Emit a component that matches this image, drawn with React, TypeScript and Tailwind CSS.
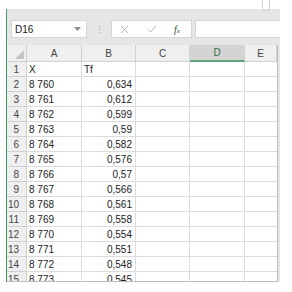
import React from "react";

const data: [string, string][] = [
  ["X", "Tf"],
  ["8 760", "0,634"],
  ["8 761", "0,612"],
  ["8 762", "0,599"],
  ["8 763", "0,59"],
  ["8 764", "0,582"],
  ["8 765", "0,576"],
  ["8 766", "0,57"],
  ["8 767", "0,566"],
  ["8 768", "0,561"],
  ["8 769", "0,558"],
  ["8 770", "0,554"],
  ["8 771", "0,551"],
  ["8 772", "0,548"],
  ["8 773", "0,545"],
];

const cols = [
  { name: "A", w: "w-[55px]" },
  { name: "B", w: "w-[54px]" },
  { name: "C", w: "w-[54px]" },
  { name: "D", w: "w-[55px]" },
  { name: "E", w: "w-[32px]" },
];

export default function App() {
  return (
    <div className="relative w-[292px] h-[292px] overflow-hidden bg-white text-[#222] [font-family:'Liberation_Sans',Arial,sans-serif]">
      <div className="absolute left-[262px] top-0 h-[11px] w-[8px] border-x border-b border-[#d4d4d4]" />
      <div className="pt-[9px] pl-[6px]">
        <div className="flex h-[273px] w-[274px] flex-col overflow-hidden border-l border-[#3f9a62] bg-[#e6e6e6]">
          {/* formula bar */}
          <div className="mt-[11px] flex h-[18px] shrink-0 items-stretch">
            <div className="ml-[4px] flex w-[76px] items-center justify-between border border-[#d6d6d6] bg-white pl-[3px] pr-[5px] text-[10px]">
              <span>D16</span>
              <svg width="7" height="4" viewBox="0 0 7 4">
                <path d="M0 0h7L3.5 4z" fill="#8a8a8a" />
              </svg>
            </div>
            <div className="flex w-[24px] flex-col items-center justify-center gap-[2px]">
              <span className="h-[1px] w-[1px] bg-[#aaa]" />
              <span className="h-[1px] w-[1px] bg-[#aaa]" />
              <span className="h-[1px] w-[1px] bg-[#aaa]" />
            </div>
            <div className="flex w-[81px] items-center border border-[#d6d6d6] bg-white">
              <svg className="ml-[8px]" width="9" height="9" viewBox="0 0 9 9">
                <path d="M1 1l7 7M8 1L1 8" stroke="#b4b4b4" strokeWidth="1" />
              </svg>
              <svg className="ml-[18px]" width="10" height="8" viewBox="0 0 10 8">
                <path d="M1 4.5l2.5 2.5L9 1" stroke="#b4b4b4" strokeWidth="1" fill="none" />
              </svg>
              <span className="ml-[17px] text-[10px] italic text-[#444] [font-family:'Liberation_Serif',serif]">
                f<span className="text-[7px]">x</span>
              </span>
            </div>
            <div className="ml-[3px] flex-1 border border-r-0 border-[#d6d6d6] bg-white" />
          </div>

          {/* grid */}
          <div className="mt-[7px] flex h-[237px] w-[271px] shrink-0 flex-col overflow-hidden border-r border-b border-[#bdbdbd] bg-white">
            <div className="flex h-[17px] shrink-0 bg-[#efefef] text-[10px] text-[#444]">
              <div className="relative w-[20px] border-r border-b border-[#d0d0d0]">
                <svg className="absolute right-[2px] bottom-[2px]" width="9" height="9" viewBox="0 0 9 9">
                  <path d="M9 0v9H0z" fill="#c4c4c4" />
                </svg>
              </div>
              {cols.map((c) => (
                <div
                  key={c.name}
                  className={`${c.w} flex shrink-0 items-center justify-center border-r border-[#d0d0d0] ${
                    c.name === "D"
                      ? "border-b-2 border-b-[#5fa57d] bg-[#d4d4d4] text-[#2e6e4a]"
                      : "border-b border-b-[#d0d0d0]"
                  }`}
                >
                  {c.name}
                </div>
              ))}
            </div>
            {data.map((r, i) => (
              <div key={i} className="flex h-[15px] shrink-0 text-[10px]">
                <div className="flex w-[20px] items-center justify-end whitespace-nowrap border-r border-b border-[#d0d0d0] bg-[#efefef] pr-[7px] text-[#444]">
                  {i + 1}
                </div>
                <div className="flex w-[55px] items-center border-r border-b border-[#dcdcdc] pl-[2px]">
                  {r[0]}
                </div>
                <div
                  className={`flex w-[54px] items-center border-r border-b border-[#dcdcdc] ${
                    i === 0 ? "pl-[2px]" : "justify-end pr-[3px]"
                  }`}
                >
                  {r[1]}
                </div>
                <div className="w-[54px] border-r border-b border-[#dcdcdc]" />
                <div className="w-[55px] border-r border-b border-[#dcdcdc]" />
                <div className="w-[32px] border-b border-[#dcdcdc]" />
              </div>
            ))}
          </div>
        </div>
      </div>
    </div>
  );
}
